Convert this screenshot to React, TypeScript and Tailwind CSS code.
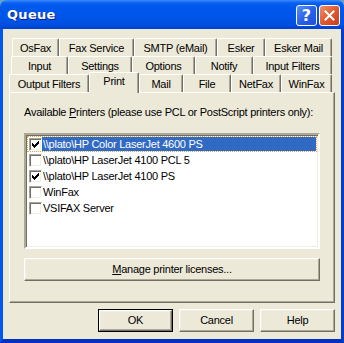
const face = "bg-[#ECE9D8]";

type TabDef = { label: string; w: string; active?: boolean };

const rows: { ml: string; tabs: TabDef[] }[] = [
  {
    ml: "ml-[3px]",
    tabs: [
      { label: "OsFax", w: "w-[47px]" },
      { label: "Fax Service", w: "w-[75px]" },
      { label: "SMTP (eMail)", w: "w-[83px]" },
      { label: "Esker", w: "w-[48px]" },
      { label: "Esker Mail", w: "w-[67px]" },
    ],
  },
  {
    ml: "ml-[2px]",
    tabs: [
      { label: "Input", w: "w-[57px]" },
      { label: "Settings", w: "w-[64px]" },
      { label: "Options", w: "w-[63px]" },
      { label: "Notify", w: "w-[58px]" },
      { label: "Input Filters", w: "w-[79px]" },
    ],
  },
  {
    ml: "ml-0",
    tabs: [
      { label: "Output Filters", w: "w-[80px]" },
      { label: "Print", w: "w-[50px]", active: true },
      { label: "Mail", w: "w-[44px]" },
      { label: "File", w: "w-[48px]" },
      { label: "NetFax", w: "w-[50px]" },
      { label: "WinFax", w: "w-[51px]" },
    ],
  },
];

const printers = [
  { name: "\\\\plato\\HP Color LaserJet 4600 PS", checked: true, selected: true },
  { name: "\\\\plato\\HP LaserJet 4100 PCL 5", checked: false },
  { name: "\\\\plato\\HP LaserJet 4100 PS", checked: true },
  { name: "WinFax", checked: false },
  { name: "VSIFAX Server", checked: false },
];

const Tab = ({ label, w, active }: TabDef) => (
  <div
    className={
      active
        ? `${w} ${face} relative z-10 -mt-[2px] -mb-[1px] h-[21px] shrink-0 flex justify-center pt-[2px] border-l border-t border-white border-r border-r-[#716F64] rounded-t-[2px] shadow-[inset_-1px_0_0_#ACA899]`
        : `${w} ${face} h-[18px] shrink-0 flex items-center justify-center pt-[1px] border-l border-t border-white border-r border-r-[#716F64] rounded-t-[2px] shadow-[inset_-1px_0_0_#ACA899]`
    }
  >
    {label}
  </div>
);

const CheckBox = ({ checked }: { checked: boolean }) => (
  <div className="w-[13px] h-[13px] shrink-0 bg-white border border-t-[#ACA899] border-l-[#ACA899] border-b-white border-r-white shadow-[inset_1px_1px_0_#716F64,inset_-1px_-1px_0_#F1EFE2] flex items-center justify-center">
    {checked && (
      <svg width="7" height="7" viewBox="0 0 7 7">
        <path d="M0 2h1v1h1v1h1V3h1V2h1V1h1V0h1v3H6v1H5v1H4v1H3v1H2V6H1V5H0z" fill="#000" />
      </svg>
    )}
  </div>
);

const Button = ({ children, isDefault, w }: { children: React.ReactNode; isDefault?: boolean; w: string }) => (
  <div className={`${w} h-[23px] ${isDefault ? "border border-black" : ""}`}>
    <div className={`h-full ${face} border border-t-white border-l-white border-b-[#716F64] border-r-[#716F64] shadow-[inset_-1px_-1px_0_#ACA899,inset_1px_1px_0_#F1EFE2] flex items-center justify-center`}>
      {children}
    </div>
  </div>
);

export default function App() {
  return (
    <div className="w-[344px] h-[343px] bg-[#5FA3C7] text-[11px] leading-[13px] tracking-[-0.25px] text-black font-['Liberation_Sans',Arial,sans-serif]">
      <div className="w-full h-full flex flex-col rounded-t-[7px] overflow-hidden">
        <div className="h-[29px] shrink-0 flex items-center pl-[7px] pr-[4px] bg-[linear-gradient(to_bottom,#3D8BFF_0%,#0A61F0_10%,#0058EE_20%,#0055E8_60%,#0050E0_85%,#0040D0_100%)]">
          <span className="text-white font-bold text-[13px] font-['DejaVu_Sans',sans-serif] tracking-[0.3px] [text-shadow:1px_1px_0_#0A1E8C]">
            Queue
          </span>
          <div className="ml-auto flex gap-[2px] mt-[2px]">
            <div className="w-[21px] h-[21px] rounded-[3px] border border-white bg-[linear-gradient(135deg,#5A90F8,#2A62E8_50%,#1D4FD8)] flex items-center justify-center text-white font-bold text-[16px] tracking-normal font-['DejaVu_Sans',sans-serif]">
              ?
            </div>
            <div className="w-[21px] h-[21px] rounded-[3px] border border-white bg-[linear-gradient(135deg,#F09070,#E05A30_50%,#C83E1C)] flex items-center justify-center">
              <svg width="11" height="11" viewBox="0 0 11 11">
                <path d="M1.5 1.5l8 8M9.5 1.5l-8 8" stroke="#fff" strokeWidth="2" strokeLinecap="square" />
              </svg>
            </div>
          </div>
        </div>
        <div className="flex-1 flex flex-col bg-[#0050E0] border-l-[3px] border-r-[3px] border-b-[4px] border-l-[#0058EE] border-r-[#0040D0] border-b-[#0030C0]">
          <div className={`flex-1 ${face} flex flex-col px-[6px] pt-[9px]`}>
            <div className="flex flex-col">
              {rows.map((r, i) => (
                <div key={i} className={`flex ${r.ml}`}>
                  {r.tabs.map((t) => (
                    <Tab key={t.label} {...t} />
                  ))}
                </div>
              ))}
              <div className="relative h-[211px] border border-t-white border-l-white border-b-[#716F64] border-r-[#716F64] shadow-[inset_-1px_-1px_0_#ACA899] px-[14px] pt-[13px]">
                <div className="h-[13px] whitespace-nowrap">
                  Available <span className="underline">P</span>rinters (please use PCL or PostScript printers only):
                </div>
                <div className="mt-[14px] h-[116px] bg-white border-2 border-t-[#ACA899] border-l-[#ACA899] border-b-white border-r-white shadow-[inset_1px_1px_0_#716F64,inset_-1px_-1px_0_#F1EFE2] pt-[1px] px-[1px]">
                  {printers.map((p) => (
                    <div
                      key={p.name}
                      className={`h-[16px] flex items-center pl-[1px] ${p.selected ? "border border-dotted border-[#E8A848]" : "border border-transparent"}`}
                    >
                      <CheckBox checked={p.checked} />
                      <div className={`h-full flex-1 flex items-center pl-[1px] whitespace-nowrap ${p.selected ? "bg-[#316AC5] text-white" : ""}`}>
                        {p.name}
                      </div>
                    </div>
                  ))}
                </div>
                <div className="mt-[9px]">
                  <Button w="w-full">
                    <span>
                      <span className="underline">M</span>anage printer licenses...
                    </span>
                  </Button>
                </div>
              </div>
            </div>
            <div className="mt-[6px] flex justify-end gap-[6px]">
              <Button w="w-[75px]" isDefault>
                OK
              </Button>
              <Button w="w-[75px]">Cancel</Button>
              <Button w="w-[75px]">Help</Button>
            </div>
          </div>
        </div>
      </div>
    </div>
  );
}
